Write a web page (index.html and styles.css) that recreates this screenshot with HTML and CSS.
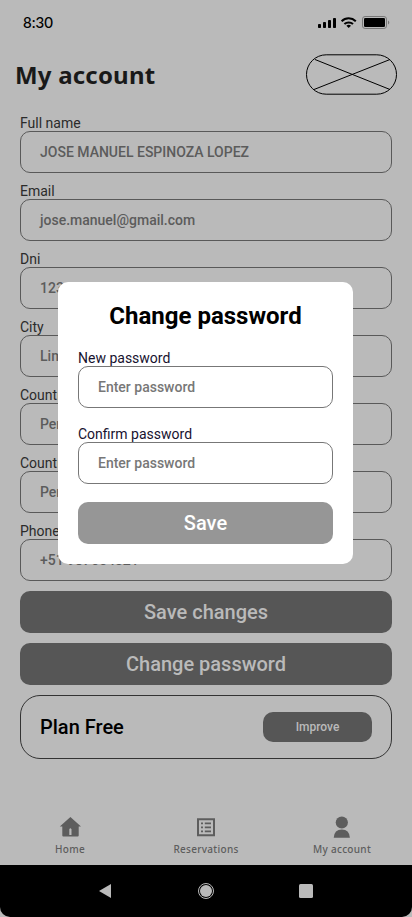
FILE: index.html
```html
<!DOCTYPE html>
<html lang="en">
<head>
<meta charset="utf-8">
<meta name="viewport" content="width=device-width, initial-scale=1">
<title>My account</title>
<link rel="stylesheet" href="styles.css">
</head>
<body>
<div class="phone">
  <div class="status">
    <span class="time">8:30</span>
    <svg class="status-icons" width="74" height="16" viewBox="0 0 74 16">
      <rect x="1" y="10" width="3" height="4" rx=".8"/><rect x="6" y="8" width="3" height="6" rx=".8"/><rect x="11" y="6" width="3" height="8" rx=".8"/><rect x="16" y="4" width="3" height="10" rx=".8"/>
      <g fill="none" stroke="#000" stroke-width="2"><path d="M24.600 7.200a10.300 10.300 0 0 1 14.200 0"/><path d="M27.400 10.100a6.300 6.300 0 0 1 8.600 0"/></g>
      <path d="M31.700 14l-2.300-2.300a3.500 3.500 0 0 1 4.600 0z"/>
      <rect x="45.500" y="2.500" width="24" height="12" rx="2.600" fill="none" stroke="#777"/>
      <rect x="47" y="4" width="21" height="9" rx="1.300"/>
      <path d="M71 6.500v4a2.200 2.200 0 0 0 0-4" fill="#777"/>
    </svg>
  </div>
  <header class="top">
    <h1>My account</h1>
    <svg class="logo" width="92" height="42" viewBox="0 0 92 42" fill="none" stroke="#000"><rect x=".5" y=".8" width="90" height="39.400" rx="19.700"/><path d="M9 5.500L84 35.500M84 5.500L8 35.500"/></svg>
  </header>
  <main class="form">
    <div class="field"><label>Full name</label><div class="input">JOSE MANUEL ESPINOZA LOPEZ</div></div>
    <div class="field"><label>Email</label><div class="input">jose.manuel@gmail.com</div></div>
    <div class="field"><label>Dni</label><div class="input">12345678</div></div>
    <div class="field"><label>City</label><div class="input">Lima</div></div>
    <div class="field"><label>Country</label><div class="input">Peru</div></div>
    <div class="field"><label>Country</label><div class="input">Peru</div></div>
    <div class="field"><label>Phone</label><div class="input">+51 987654321</div></div>
    <div class="button">Save changes</div>
    <div class="button">Change password</div>
    <div class="plan"><span>Plan Free</span><div class="improve">Improve</div></div>
  </main>
  <nav class="tabs">
    <div class="tab"><svg width="24" height="24" viewBox="0 0 24 24"><path fill-rule="evenodd" d="M12.400 3L1.800 12.400H4.300V21.600Q4.300 22.600 5.300 22.600H19.700Q20.700 22.600 20.700 21.600V12.400H23ZM11.300 15.300Q12.400 13.400 13.500 15.300V21H11.300Z"/></svg><span>Home</span></div>
    <div class="tab"><svg width="24" height="24" viewBox="0 0 24 24"><path d="M4 5.200H20V21.300H4Z" fill="none" stroke="#5d5d5d" stroke-width="2"/><path d="M7 9.300h2M7 13.300h2M7 17.300h2M10.800 9.300h6.200M10.800 13.300h6.200M10.800 17.300h6.200" stroke="#5d5d5d" stroke-width="1.700"/></svg><span>Reservations</span></div>
    <div class="tab"><svg width="24" height="24" viewBox="0 0 24 24"><circle cx="11.800" cy="8.500" r="6.100"/><path d="M3.700 23.800Q4.300 15.600 11.800 15.600T19.900 23.800Z"/></svg><span>My account</span></div>
  </nav>
  <div class="system">
    <svg width="14" height="16" viewBox="0 0 14 16"><path d="M13 1V15L1 8Z"/></svg>
    <svg width="16" height="16" viewBox="0 0 16 16"><circle cx="8" cy="8" r="7.500" fill="none" stroke="#bababa"/><circle cx="8" cy="8" r="6"/></svg>
    <svg class="square" width="14" height="14" viewBox="0 0 14 14"><rect width="14" height="14" rx="1.500"/></svg>
  </div>
  <section class="modal">
    <h2>Change password</h2>
    <div class="field"><label>New password</label><div class="input">Enter password</div></div>
    <div class="field"><label>Confirm password</label><div class="input">Enter password</div></div>
    <div class="button">Save</div>
  </section>
</div>
</body>
</html>
```
FILE: styles.css
```css
* { box-sizing: border-box; }
body { margin: 0; background: #bababa; font-family: Roboto, sans-serif; }
.phone { position: relative; height: 917px; display: flex; flex-direction: column; overflow: hidden; }
.status { height: 46px; padding: 0 21px 2px 23px; display: flex; align-items: center; justify-content: space-between; }
.time { font: 500 15px/20px Lato, sans-serif; }
.top { height: 58px; padding: 0 14px 0 15px; display: flex; align-items: center; justify-content: space-between; }
h1 { margin: 0; font: 700 24px/32px "Noto Sans", sans-serif; letter-spacing: .2px; color: #191919; }
.form { flex: 1; padding: 12px 20px 0; }
.field { height: 68px; }
label { display: block; height: 15px; font-size: 14px; line-height: 15px; color: #2b2b2b; white-space: nowrap; }
.input { height: 42px; border: 1px solid #595959; border-radius: 10px; padding: 0 19px; font-size: 14px; line-height: 40px; font-weight: 500; color: #5c5c5c; }
.button { height: 42px; border-radius: 10px; background: #565656; color: #bababa; font-weight: 500; font-size: 20px; line-height: 42px; text-align: center; margin-bottom: 10px; }
.form > .button:nth-of-type(8) { margin-top: -1px; }
.plan { height: 64px; border: 1px solid #333; border-radius: 20px; padding: 0 19px; display: flex; align-items: center; justify-content: space-between; font-size: 20px; font-weight: 500; }
.improve { width: 109px; height: 30px; border-radius: 10px; background: #565656; color: #bababa; font-size: 12px; line-height: 30px; text-align: center; }
.tabs { height: 60px; padding: 9px 2px 0; display: grid; grid-template-columns: repeat(3, 1fr); }
.tab { display: flex; flex-direction: column; align-items: center; font: 500 10px/14px "Noto Sans", sans-serif; letter-spacing: .3px; color: #5d5d5d; }
.tab svg { fill: #5d5d5d; margin-bottom: 4px; }
.system { height: 52px; background: #000; border-radius: 0 0 10px 10px; display: flex; justify-content: center; align-items: center; gap: 86px; padding-right: 1px; }
.system svg { fill: #bababa; }
.system .square { margin: 0 1px 0 -1px; }
.modal { position: absolute; left: 58px; top: 282px; width: 295px; height: 282px; border-radius: 10px; background: #fff; padding: 19px 20px; }
h2 { margin: 0 0 20px; font-size: 24px; line-height: 30px; font-weight: 700; text-align: center; }
.modal .field { height: 76px; }
.modal label { color: #17122f; }
.modal .input { border-color: #777; color: #777; }
.modal .button { background: #969696; color: #fff; margin: -1px 0 0; }
```
